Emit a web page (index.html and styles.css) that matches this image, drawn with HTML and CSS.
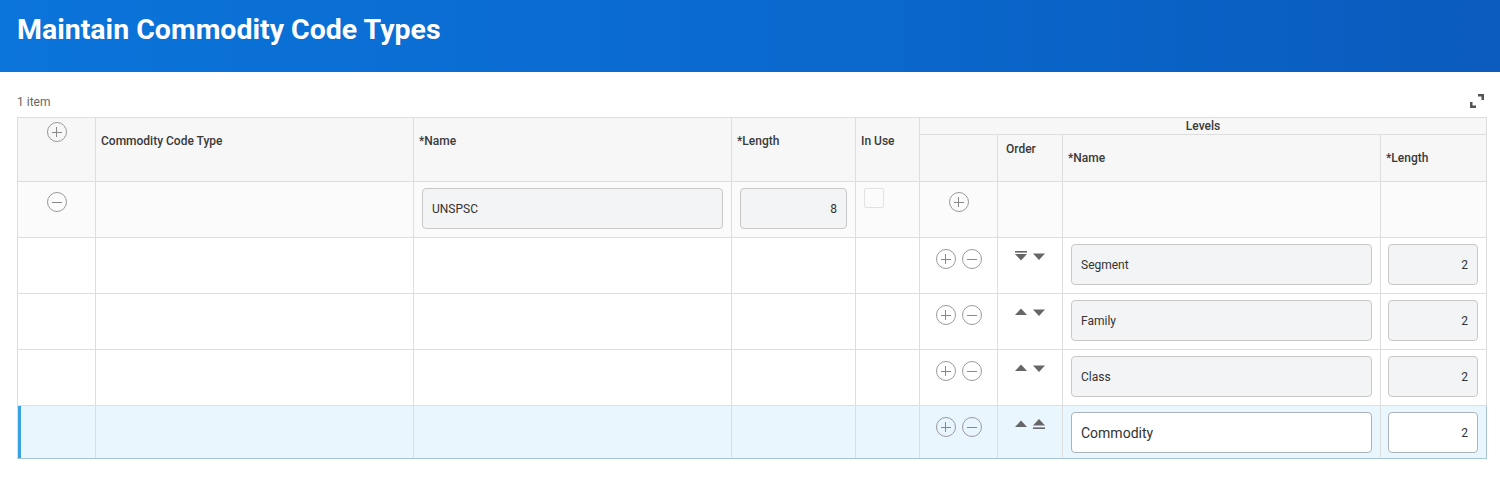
FILE: index.html
```html
<!DOCTYPE html>
<html lang="en">
  <head>
    <meta charset="UTF-8" />
    <meta name="viewport" content="width=device-width, initial-scale=1.0" />
    <link rel="stylesheet" href="styles.css">
    <title>Maintain Commodity Code Types</title>
  </head>
  <body>
    <div class="page-header">
      <h1>Maintain Commodity Code Types</h1>
    </div>

    <div class="grid-wrap">
      <div class="toolbar">
        <span class="count">1 item</span>
        <svg class="expand" width="16" height="16" viewBox="0 0 16 16">
          <path d="M1 9v6h6v-2.5H3.5V9z M9 1v2.5h3.5V7H15V1z" fill="#555"/>
        </svg>
      </div>

      <table class="grid">
        <colgroup>
          <col style="width:78px">
          <col style="width:318px">
          <col style="width:318px">
          <col style="width:124px">
          <col style="width:64px">
          <col style="width:78px">
          <col style="width:65px">
          <col style="width:318px">
          <col style="width:106px">
        </colgroup>
        <thead>
          <tr class="group-row">
            <th rowspan="2" class="icon-head"><span class="circ plus"></span></th>
            <th rowspan="2">Commodity Code Type</th>
            <th rowspan="2">*Name</th>
            <th rowspan="2">*Length</th>
            <th rowspan="2">In Use</th>
            <th colspan="4" class="group">Levels</th>
          </tr>
          <tr class="sub-row">
            <th></th>
            <th class="order-head">Order</th>
            <th class="mid">*Name</th>
            <th class="mid">*Length</th>
          </tr>
        </thead>
        <tbody>
          <tr class="parent">
            <td class="icons single"><span class="circ minus"></span></td>
            <td></td>
            <td class="field"><div class="input">UNSPSC</div></td>
            <td class="field"><div class="input num">8</div></td>
            <td class="check-cell"><span class="checkbox"></span></td>
            <td class="icons single"><span class="circ plus"></span></td>
            <td></td>
            <td></td>
            <td></td>
          </tr>
          <tr>
            <td></td><td></td><td></td><td></td><td></td>
            <td class="icons pair"><span class="circ plus"></span><span class="circ minus"></span></td>
            <td class="order">
              <svg width="12" height="10" viewBox="0 0 12 10"><rect x="0" y="0" width="12" height="1.6" fill="#666"/><path d="M0 3h12l-6 6.5z" fill="#666"/></svg>
              <svg width="12" height="10" viewBox="0 0 12 10"><path d="M0 2.5h12l-6 6.5z" fill="#666"/></svg>
            </td>
            <td class="field"><div class="input">Segment</div></td>
            <td class="field last"><div class="input num">2</div></td>
          </tr>
          <tr>
            <td></td><td></td><td></td><td></td><td></td>
            <td class="icons pair"><span class="circ plus"></span><span class="circ minus"></span></td>
            <td class="order">
              <svg width="12" height="10" viewBox="0 0 12 10"><path d="M0 8h12l-6-6.5z" fill="#666"/></svg>
              <svg width="12" height="10" viewBox="0 0 12 10"><path d="M0 2.5h12l-6 6.5z" fill="#666"/></svg>
            </td>
            <td class="field"><div class="input">Family</div></td>
            <td class="field last"><div class="input num">2</div></td>
          </tr>
          <tr>
            <td></td><td></td><td></td><td></td><td></td>
            <td class="icons pair"><span class="circ plus"></span><span class="circ minus"></span></td>
            <td class="order">
              <svg width="12" height="10" viewBox="0 0 12 10"><path d="M0 8h12l-6-6.5z" fill="#666"/></svg>
              <svg width="12" height="10" viewBox="0 0 12 10"><path d="M0 2.5h12l-6 6.5z" fill="#666"/></svg>
            </td>
            <td class="field"><div class="input">Class</div></td>
            <td class="field last"><div class="input num">2</div></td>
          </tr>
          <tr class="active">
            <td class="first"></td><td></td><td></td><td></td><td></td>
            <td class="icons pair"><span class="circ plus"></span><span class="circ minus"></span></td>
            <td class="order">
              <svg width="12" height="10" viewBox="0 0 12 10"><path d="M0 8h12l-6-6.5z" fill="#666"/></svg>
              <svg width="12" height="10" viewBox="0 0 12 10"><path d="M0 6.5h12l-6-6.5z" fill="#666"/><rect x="0" y="8.4" width="12" height="1.6" fill="#666"/></svg>
            </td>
            <td class="field"><div class="input edit big">Commodity</div></td>
            <td class="field last"><div class="input edit num">2</div></td>
          </tr>
        </tbody>
      </table>
    </div>
  </body>
</html>
```

FILE: styles.css
```css
* {
  box-sizing: border-box;
}

body {
  margin: 0;
  background: #fff;
  font-family: Roboto, "Liberation Sans", Arial, sans-serif;
  color: #333;
}

.page-header {
  height: 72px;
  background: linear-gradient(90deg, #0b74da 0%, #0a67cc 60%, #0a5bbd 100%);
  padding: 13px 17px 0;
}

.page-header h1 {
  margin: 0;
  color: #fff;
  font-size: 28.5px;
  font-weight: 700;
}

.grid-wrap {
  padding: 0 14px 0 17px;
}

.toolbar {
  display: flex;
  justify-content: space-between;
  align-items: flex-end;
  height: 45px;
  padding-bottom: 8px;
}

.count {
  font-size: 12px;
  color: #666;
}

.expand {
  margin-right: 1px;
}

.grid {
  border-collapse: collapse;
  table-layout: fixed;
  width: 1469px;
  font-size: 12px;
}

.grid th,
.grid td {
  border: 1px solid #dedede;
  padding: 0;
  vertical-align: top;
  text-align: left;
}

.grid th {
  background: #f7f7f7;
  font-weight: 500;
  color: #3a3a3a;
  padding: 16px 5px 0;
}

.grid .group-row {
  height: 17px;
}

.grid .sub-row {
  height: 47px;
}

.grid th.group {
  text-align: center;
  padding: 1px 0 0;
  height: 17px;
}

.grid th.order-head {
  padding: 7px 8px 0;
}

.grid th.mid {
  padding: 16px 5px 0;
}

.grid th.icon-head {
  padding: 4px 0 0;
  text-align: center;
}

.grid tbody tr {
  height: 56px;
}

.grid tbody tr.active {
  height: 53px;
}

.grid tr.parent td {
  background: #fbfbfb;
}

.grid tr.active td {
  background: #eaf6fd;
  border-top: 1px solid #a7c7d9;
  border-bottom: 1px solid #a7c7d9;
}

.grid tr.active td.first {
  box-shadow: inset 3px 0 0 #3ba2e2;
}

.grid tr.active td:last-child {
  border-right: 1px solid #a7c7d9;
}

.circ {
  display: inline-block;
  width: 20px;
  height: 20px;
  border: 1px solid #999;
  border-radius: 50%;
  position: relative;
  vertical-align: top;
}

.circ::before,
.circ::after {
  content: "";
  position: absolute;
  background: #888;
  left: 4px;
  top: 8.5px;
  width: 10px;
  height: 1px;
}

.circ.plus::after {
  left: 8.5px;
  top: 4px;
  width: 1px;
  height: 10px;
}

.circ.minus::after {
  display: none;
}

.grid td.icons {
  text-align: center;
}

.grid td.single {
  padding-top: 10px;
}

.grid td.pair {
  padding-top: 11px;
}

.grid td.pair .circ + .circ {
  margin-left: 6px;
}

.grid td.order {
  padding: 12px 0 0;
  text-align: center;
}

.grid td.order svg {
  margin: 0 2px;
}

.grid td.field {
  padding: 6px 8px 0 8px;
}

.grid td.field.last {
  padding: 6px 8px 0 7px;
}

.input {
  height: 41px;
  border: 1px solid #c8c8c8;
  border-radius: 4px;
  background: #f3f4f5;
  font-size: 12px;
  color: #333;
  padding: 13px 9px 0;
}

.input.num {
  text-align: right;
}

.input.edit {
  background: #fff;
  border-color: #aab3b9;
}

.input.big {
  font-size: 14px;
  padding-top: 12px;
}

.grid td.check-cell {
  padding: 6px 0 0 8px;
}

.checkbox {
  display: block;
  width: 20px;
  height: 20px;
  border: 1px solid #e2e2e2;
  border-radius: 2px;
  background: #fbfbfb;
}
```
